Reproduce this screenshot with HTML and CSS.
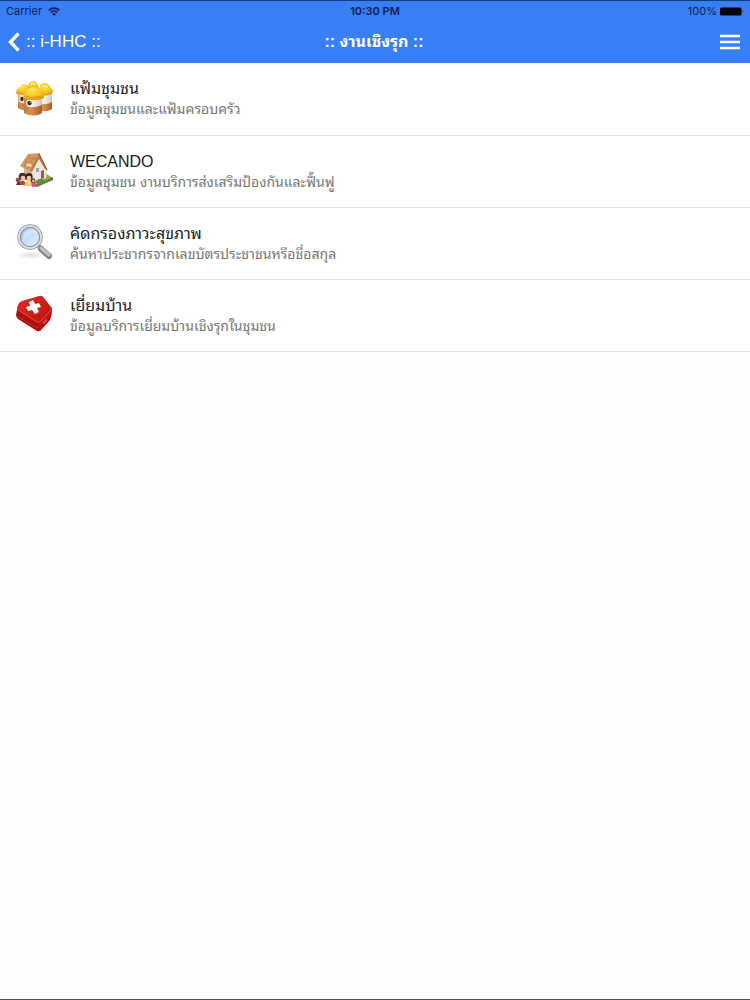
FILE: index.html
```html
<!DOCTYPE html>
<html lang="th">
<head>
<meta charset="utf-8">
<meta name="viewport" content="width=device-width, initial-scale=1">
<title>งานเชิงรุก</title>
<link rel="stylesheet" href="styles.css">
</head>
<body>
<div class="screen">
  <header class="top">
    <div class="status">
      <span class="carrier">Carrier
        <svg class="wifi" viewBox="0 0 12 9" aria-hidden="true"><path d="M.8 3.300a7.400 7.400 0 0 1 10.400 0M2.700 5.500a4.800 4.800 0 0 1 6.600 0" fill="none" stroke="#0b1f55" stroke-width="1.700"/><path d="M4 6.900a3 3 0 0 1 4 0L6 9z" fill="#0b1f55"/></svg>
      </span>
      <time class="clock">10:30 PM</time>
      <span class="power">100%
        <svg class="battery" viewBox="0 0 24 9" aria-hidden="true"><rect x="0" y=".5" width="21.500" height="8" rx="1.500" fill="#01040f"/><path d="M22.300 3q1.600 1.500 0 3z" fill="#01040f"/></svg>
      </span>
    </div>
    <nav class="bar">
      <a class="back" href="#">
        <svg class="chevron" viewBox="0 0 12 20" aria-hidden="true"><path d="M10.500 1.500L2.500 10l8 8.500" fill="none" stroke="#fff" stroke-width="3.400"/></svg>
        <span>:: i-HHC ::</span>
      </a>
      <h1 class="title">:: งานเชิงรุก ::</h1>
      <button class="menu" type="button" aria-label="Menu">
        <svg class="lines" viewBox="0 0 20 16" aria-hidden="true"><path d="M0 2h20M0 8h20M0 14h20" stroke="#fff" stroke-width="2.400"/></svg>
      </button>
    </nav>
  </header>
  <main class="list">
    <a class="row" href="#">
      <svg class="icon" viewBox="0 0 50 50" aria-hidden="true">
        <defs>
          <linearGradient id="cup" x1="0" x2="1"><stop offset="0" stop-color="#b9743f"/><stop offset=".35" stop-color="#d99458"/><stop offset="1" stop-color="#a95c22"/></linearGradient>
          <linearGradient id="face" x1="0" x2="1"><stop offset="0" stop-color="#d8a678"/><stop offset=".4" stop-color="#fff7ef"/><stop offset="1" stop-color="#cfc6bf"/></linearGradient>
          <radialGradient id="hat" cx=".45" cy=".3" r=".7"><stop offset="0" stop-color="#ffe34d"/><stop offset=".65" stop-color="#f5c220"/><stop offset="1" stop-color="#d8990d"/></radialGradient>
        </defs>
        <path d="M18 13l1-5q4-4 8 0l2 6z" fill="url(#hat)"/>
        <path d="M28 17h14v17q-7 4-14 0z" fill="url(#face)"/><path d="M28 28q7 3 14-1v7q-7 4-14 1z" fill="url(#cup)"/>
        <path d="M27 17l2-3 1-4q5-4 9 0l2 3 2 2-1 4q-7 3-14 0z" fill="url(#hat)"/>
        <path d="M8 17h10v17q-6 2-10-1z" fill="url(#face)"/><path d="M8 27q4 2 9 1v7q-5 1-9-2z" fill="url(#cup)"/>
        <path d="M6 18l1-4 2-1q1-4 5-4l5 2 1 7q-6 3-13 1z" fill="url(#hat)"/>
        <ellipse cx="12" cy="24" rx="1.700" ry="2.300" fill="#49301f"/>
        <path d="M14 22h18v16q-8 5-18 0z" fill="url(#face)"/><path d="M14 31q9 3 18-1v8q-8 5-18 0z" fill="url(#cup)"/>
        <path d="M13 23l1-5 2-1q1-5 7-5 6-1 8 5l3 1v5q-9 4-19 1z" fill="url(#hat)"/>
        <path d="M14 24q6 0 9 4-3 4-9 4z" fill="#c08250"/><circle cx="19.500" cy="28" r="3.300" fill="#fff8ef"/><circle cx="19.500" cy="28" r="2.200" fill="#2e221d"/><circle cx="20.300" cy="27.200" r=".6" fill="#fff"/>
        <path d="M19 15q3-2 7 0M10 12q3-2 5-1M32 12q4-2 6 0M21 9q2-1 4 0" fill="none" stroke="#fff085" stroke-width="1.200"/><path d="M16 21q6 3 15 0" fill="none" stroke="#d8990d"/>
      </svg>
      <span class="text"><span class="name">แฟ้มชุมชน</span><span class="note">ข้อมูลชุมชนและแฟ้มครอบครัว</span></span>
    </a>
    <a class="row" href="#">
      <svg class="icon" viewBox="0 0 50 50" aria-hidden="true">
        <path d="M13 31l17 5 13-6-8-5z" fill="#9eac54"/><path d="M20 37l10-2 13-6v3L27 39z" fill="#5b813b"/>
        <path d="M14 20l9 5v10l-9-5z" fill="#d8b391"/><path d="M22 24l7-13 8 10-1 9-13 4z" fill="#efe5dc"/>
        <path d="M18 6L30 5l-9 19-11-6z" fill="#d39a63"/><path d="M18 10l8 1M15 14l9 2M13 17l8 3M20 7l-6 11M25 7l-8 14" stroke="#bb7d48" stroke-width=".8"/>
        <path d="M29 5l8 17-2-1-6-10-7 13-2-1z" fill="#b97b49"/><path d="M29 6l8 16" stroke="#8b5b3b" stroke-width="1.200"/>
        <path d="M26 20h3v4h-3z" fill="#93a8b2"/><path d="M31 23l3-1v8l-3 1z" fill="#86634d"/><path d="M17 15l5 1-1 3-5-1z" fill="#ead9c2"/>
        <path d="M25 34q3-4 7-3l4 2-7 4z" fill="#638e40"/>
        <circle cx="12.500" cy="28.500" r="3.800" fill="#543124"/><circle cx="13" cy="30" r="2.300" fill="#f2c5a7"/><path d="M8 37q1-5 6-4l3 4z" fill="#c83c4d"/>
        <circle cx="19" cy="28.500" r="3.600" fill="#30231f"/><circle cx="19" cy="30" r="2.300" fill="#f4cbad"/><path d="M14 38l2-5 5 1 1 4z" fill="#f4d461"/><path d="M21 33l4 1 3 4-6 1z" fill="#de4f86"/><circle cx="23" cy="32.500" r="2.200" fill="#573126"/><circle cx="23.300" cy="33" r="1.200" fill="#f4cbad"/>
        <circle cx="8" cy="32" r="2.300" fill="#825036"/><path d="M6 37l2-4 3 4z" fill="#633044"/>
      </svg>
      <span class="text"><span class="name">WECANDO</span><span class="note">ข้อมูลชุมชน งานบริการส่งเสริมป้องกันและฟื้นฟู</span></span>
    </a>
    <a class="row" href="#">
      <svg class="icon" viewBox="0 0 50 50" aria-hidden="true">
        <defs><linearGradient id="glass" x1="0" y1="0" x2="1" y2="1"><stop offset="0" stop-color="#8fb6e6"/><stop offset=".5" stop-color="#c7def8"/><stop offset="1" stop-color="#eef8ff"/></linearGradient>
        <radialGradient id="shade"><stop offset="0" stop-color="#ddd"/><stop offset="1" stop-color="#fff"/></radialGradient></defs>
        <ellipse cx="21" cy="35" rx="15" ry="4" fill="url(#shade)"/>
        <path d="M28 25l7 7" stroke="#999" stroke-width="4"/><path d="M31 29l8 7" stroke="#858585" stroke-width="6" stroke-linecap="round"/><path d="M31 28l8 7" stroke="#c4c4c4" stroke-width="3" stroke-linecap="round"/>
        <circle cx="20" cy="17" r="11" fill="url(#glass)" stroke="#909298" stroke-width="3.500"/><circle cx="20" cy="17" r="11" fill="none" stroke="#dcdde1" stroke-width="2"/><circle cx="20" cy="17" r="9.500" fill="none" stroke="#7795bd" stroke-width=".8"/>
        <path d="M13 17q0-6 7-8 5 0 7 4-8 0-14 8z" fill="#fff" opacity=".35"/>
      </svg>
      <span class="text"><span class="name">คัดกรองภาวะสุขภาพ</span><span class="note">ค้นหาประชากรจากเลขบัตรประชาชนหรือชื่อสกุล</span></span>
    </a>
    <a class="row" href="#">
      <svg class="icon" viewBox="0 0 50 50" aria-hidden="true">
        <defs><linearGradient id="lid" x1="0" y1="0" x2="1" y2="1"><stop offset="0" stop-color="#dc3028"/><stop offset=".6" stop-color="#cb1b15"/><stop offset="1" stop-color="#bb1611"/></linearGradient></defs>
        <path d="M8 14q-1 4-2 9 0 2 2 4l19 12q3 1 5-2l8-9q2-5 2-10l-11 5z" fill="#a90f0d"/>
        <path d="M12 9L29 4q3-1 5 2l7 9q2 2 0 4L31 29q-2 2-4 1L9 19q-3-2-1-6 1-3 4-4z" fill="url(#lid)"/>
        <path d="M8 18l19 12q2 1 4-1l10-11" fill="none" stroke="#e84d3f"/><path d="M7 24l20 12 13-14" fill="none" stroke="#d3332a" stroke-width=".8"/><path d="M33 30l4-4v3l-4 4z" fill="#d94239"/>
        <path d="M19 10l4-2 2 4 4-1 2 4-4 1 2 4-4 2-3-4-4 1-2-4 4-1z" fill="#fff"/>
      </svg>
      <span class="text"><span class="name">เยี่ยมบ้าน</span><span class="note">ข้อมูลบริการเยี่ยมบ้านเชิงรุกในชุมชน</span></span>
    </a>
  </main>
</div>
</body>
</html>
```
FILE: styles.css
```css
* { box-sizing: border-box; }
body {
  margin: 0;
  background: #fefefe;
  color: #1c1c1e;
  font-family: "Liberation Sans", "Noto Sans Thai Looped", "Noto Sans Thai", Loma, sans-serif;
}
a { color: inherit; text-decoration: none; }
.screen {
  display: flex;
  flex-direction: column;
  min-height: 100vh;
  border-top: 1px solid #17397f;
  border-bottom: 1px solid #555;
}
.top { background: #387ef5; color: #fff; }
.status {
  display: grid;
  grid-template-columns: 1fr auto 1fr;
  align-items: center;
  height: 20px;
  padding: 0 6px;
  color: #0b1f55;
  font-family: Inter, sans-serif;
  font-size: 11px;
}
.carrier, .power { display: flex; align-items: center; gap: 6px; }
.power { justify-content: flex-end; gap: 3px; }
.clock { font-weight: 600; }
.wifi { width: 12px; height: 9px; }
.battery { width: 24px; height: 9px; }
.bar {
  display: grid;
  grid-template-columns: 1fr auto 1fr;
  align-items: center;
  height: 42px;
  padding: 0 10px 0 8px;
}
.back { display: flex; align-items: center; gap: 6px; font-size: 17px; }
.chevron { width: 12px; height: 20px; }
.title { margin: 0; font-size: 16px; font-weight: 700; line-height: 24px; }
.menu {
  display: flex;
  justify-self: end;
  padding: 0;
  border: 0;
  background: none;
}
.lines { width: 20px; height: 16px; }
.list { flex: 1; }
.row {
  display: flex;
  gap: 10px;
  height: 72px;
  padding: 12px 10px;
  border-bottom: 1px solid #dde2e5;
  background: #fff;
}
.row:first-child { height: 73px; }
.icon { flex: none; width: 50px; height: 50px; }
.text { display: flex; flex-direction: column; padding-top: 3px; }
.name { font-size: 16px; line-height: 22px; }
.note { color: #777; font-size: 14px; line-height: 18px; }
```
